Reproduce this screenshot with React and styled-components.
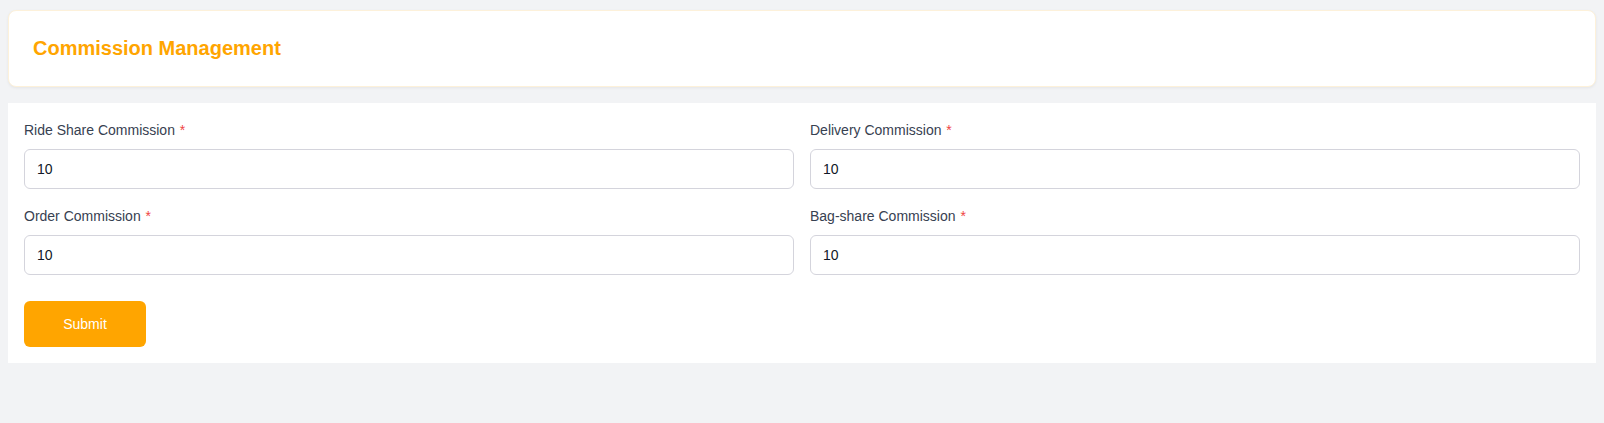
import React from "react";
import styled, { createGlobalStyle } from "styled-components";

const Global = createGlobalStyle`
    html, body {
        margin: 0;
        padding: 0;
        background: #f2f3f5;
        font-family: "Liberation Sans", Arial, sans-serif;
    }
    * {
        box-sizing: border-box;
    }
`

const Page = styled.div`
    padding: 10px 8px 0 8px;
    min-height: 423px;
    display: flex;
    flex-direction: column;
    gap: 16px;
`

const HeaderCard = styled.div`
    background: #fff;
    border: 1px solid #fdf1da;
    border-radius: 8px;
    box-shadow: 0 1px 3px rgba(0, 0, 0, 0.06);
    padding: 24px;
    h2 {
        margin: 0;
        font-size: 20px;
        line-height: 27px;
        font-weight: 700;
        color: #ffa500;
    }
`

const FormCard = styled.form`
    background: #fff;
    padding: 16px;
`

const Grid = styled.div`
    display: grid;
    grid-template-columns: 1fr 1fr;
    column-gap: 16px;
    row-gap: 16px;
`

const Field = styled.div`
    display: flex;
    flex-direction: column;
    label {
        font-size: 14px;
        line-height: 22px;
        color: #374151;
        margin-bottom: 8px;
        span {
            color: #ef4444;
            margin-left: 1px;
        }
    }
    input {
        height: 40px;
        border: 1px solid #d4d4dc;
        border-radius: 6px;
        padding: 0 12px;
        font-family: inherit;
        font-size: 14px;
        color: #111827;
        outline: none;
        background: #fff;
    }
`

const Submit = styled.button`
    margin-top: 26px;
    width: 122px;
    height: 46px;
    border: none;
    border-radius: 6px;
    background: #ffa500;
    color: #fff;
    font-family: inherit;
    font-size: 14px;
    cursor: pointer;
`

const fields = [
    { id: "ride", label: "Ride Share Commission" },
    { id: "delivery", label: "Delivery Commission" },
    { id: "order", label: "Order Commission" },
    { id: "bag", label: "Bag-share Commission" },
]

export default function App() {
    return (
        <>
            <Global />
            <Page>
                <HeaderCard>
                    <h2>Commission Management</h2>
                </HeaderCard>
                <FormCard onSubmit={(e) => e.preventDefault()}>
                    <Grid>
                        {fields.map((f) => (
                            <Field key={f.id}>
                                <label htmlFor={f.id}>
                                    {f.label} <span>*</span>
                                </label>
                                <input id={f.id} type="text" defaultValue="10" />
                            </Field>
                        ))}
                    </Grid>
                    <Submit type="submit">Submit</Submit>
                </FormCard>
            </Page>
        </>
    )
}
